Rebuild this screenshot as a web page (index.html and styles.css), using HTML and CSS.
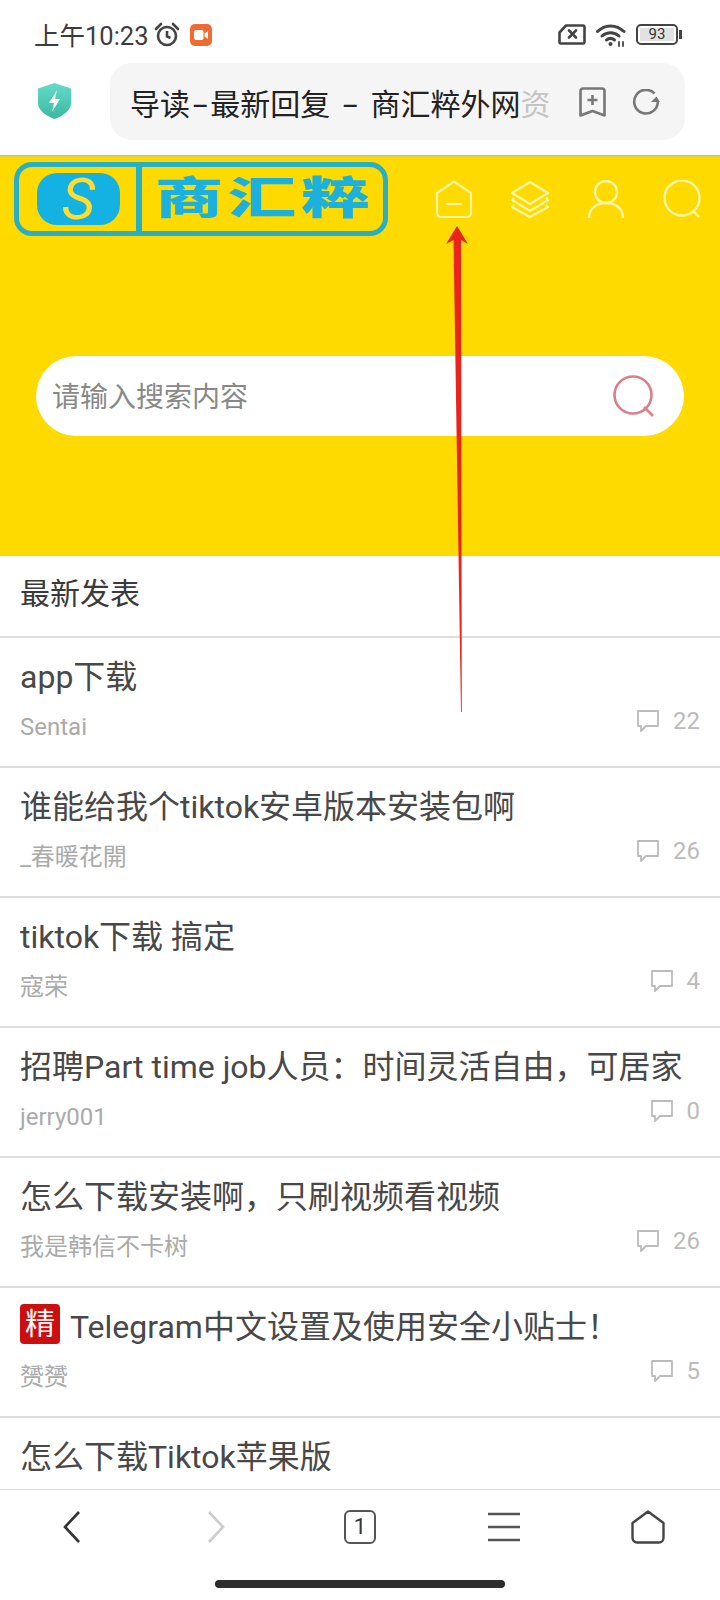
FILE: index.html
```html
<!DOCTYPE html>
<html lang="zh-CN">
<head>
    <meta charset="UTF-8">
    <meta name="viewport" content="width=device-width, initial-scale=1.0">
    <title>导读-最新回复 - 商汇粹外网资</title>
    <link rel="stylesheet" href="styles.css">
</head>
<body>
    <div class="page">
        <div class="status-bar">
            <span class="status-time">上午10:23</span>
            <svg class="icon-alarm" viewBox="0 0 26 25" fill="none" stroke="#444" stroke-width="2.600">
                <circle cx="13" cy="14" r="9"/>
                <path d="M13 9v5.500l3.500 1.500"/>
                <path d="M2 7l5-5M24 7l-5-5" stroke-linecap="round"/>
            </svg>
            <span class="status-rec">
                <svg viewBox="0 0 14 10" fill="#fff"><rect x="0" y="0" width="9.500" height="10" rx="2"/><path d="M10.500 3.500L14 1v8l-3.500-2.500z"/></svg>
            </span>
            <div class="status-right">
                <svg class="icon-sim" viewBox="0 0 28 21" fill="none" stroke="#444" stroke-width="2.600">
                    <path d="M8 1.500H25a1.500 1.500 0 0 1 1.500 1.500V18a1.500 1.500 0 0 1-1.500 1.500H3A1.500 1.500 0 0 1 1.500 18V8.500z" stroke-linejoin="round"/>
                    <path d="M11 6.500l7 7M18 6.500l-7 7" stroke-linecap="round"/>
                </svg>
                <svg class="icon-wifi" viewBox="0 0 30 24" fill="none" stroke="#444" stroke-width="3" stroke-linecap="round">
                    <path d="M1.500 8.500C9 1 20 1 28 8.500"/>
                    <path d="M6 13c5-4.500 12-4.500 17 0"/>
                    <path d="M10.500 17c2.500-2 5.500-2 8 0"/>
                    <circle cx="14.500" cy="21" r="2" fill="#444" stroke="none"/>
                    <path d="M23 19v4M27 19v4" stroke-width="1.800"/>
                </svg>
                <div class="battery">
                    <span class="battery-level">93</span>
                </div>
                <span class="battery-nub"></span>
            </div>
        </div>

        <div class="toolbar">
            <svg class="icon-shield" viewBox="0 0 33 36">
                <defs>
                    <linearGradient id="shieldFill" x1="0" y1="0" x2="0" y2="1">
                        <stop offset="0" stop-color="#63dccb"/>
                        <stop offset="1" stop-color="#3cb89f"/>
                    </linearGradient>
                </defs>
                <path d="M16.500 0L33 5.500V20c0 7.500-8 13-16.500 16C8 33 0 27.500 0 20V5.500z" fill="url(#shieldFill)"/>
                <path d="M19 7l-8 13h5l-2 9 8-13h-5z" fill="#fff"/>
            </svg>
            <div class="url-pill">
                <span class="url-text">导读<span class="url-dash">-</span>最新回复<span class="url-dash url-dash-wide">-</span>商汇粹外网<span class="url-fade">资</span></span>
                <svg class="icon-bookmark" viewBox="0 0 27 30" fill="none" stroke="#777" stroke-width="2.600" stroke-linejoin="round">
                    <path d="M4 1.500H23a2.500 2.500 0 0 1 2.500 2.500V28.500L13.500 24 1.500 28.500V4A2.500 2.500 0 0 1 4 1.500z"/>
                    <path d="M13.500 8v10M8.500 13h10"/>
                </svg>
                <svg class="icon-refresh" viewBox="0 0 28 26" fill="none" stroke="#777" stroke-width="2.600">
                    <path d="M22.500 4.500A11.800 11.800 0 1 0 25.800 13"/>
                    <path d="M19 13h9l-3.500-5.500z" fill="#777" stroke="none"/>
                </svg>
            </div>
        </div>

        <div class="content">
            <div class="site-header">
                <div class="header-top">
                    <div class="logo">
                        <div class="logo-mark"><span class="logo-badge">S</span></div>
                        <div class="logo-name"><span>商</span><span>汇</span><span>粹</span></div>
                    </div>
                    <div class="header-nav">
                        <svg viewBox="0 0 38 38" fill="none" stroke="#fff5a3" stroke-width="2.200">
                            <path d="M2 13L19 1.500 36 13V33a4 4 0 0 1-4 4H6a4 4 0 0 1-4-4z" stroke-linejoin="round"/>
                            <path d="M11 24h16"/>
                        </svg>
                        <svg viewBox="0 0 38 38" fill="none" stroke="#fff5a3" stroke-width="2.400" stroke-linejoin="round">
                            <path d="M19 2L37 13 19 24 1 13z"/>
                            <path d="M3 18L1 20 19 31 37 20 35 18"/>
                            <path d="M3 25L1 27 19 37 37 27 35 25"/>
                        </svg>
                        <svg viewBox="0 0 38 38" fill="none" stroke="#fff5a3" stroke-width="2.400">
                            <circle cx="19" cy="12" r="11"/>
                            <path d="M2 38C2 28 10 23 19 23S36 28 36 38"/>
                        </svg>
                        <svg viewBox="0 0 38 38" fill="none" stroke="#fff5a3" stroke-width="2.400">
                            <circle cx="19" cy="18" r="17.500"/>
                            <path d="M30 31l6 6"/>
                        </svg>
                    </div>
                </div>
                <div class="search-bar">
                    <span class="search-hint">请输入搜索内容</span>
                    <svg class="search-icon" viewBox="0 0 42 42" fill="none" stroke="#d9808a" stroke-width="2.600">
                        <circle cx="20" cy="20" r="18.500"/>
                        <path d="M31 32l9 9"/>
                    </svg>
                </div>
            </div>

            <div class="list-heading">最新发表</div>

            <div class="topic">
                <div class="topic-title">app下载</div>
                <div class="topic-foot">
                    <span class="topic-author">Sentai</span>
                    <span class="topic-replies"><svg viewBox="0 0 22 22" fill="none" stroke="#bbb" stroke-width="1.800"><path d="M1 1H21V16H9L4 21V16H1z" stroke-linejoin="round"/></svg>22</span>
                </div>
            </div>
            <div class="topic">
                <div class="topic-title">谁能给我个tiktok安卓版本安装包啊</div>
                <div class="topic-foot">
                    <span class="topic-author">_春暖花開</span>
                    <span class="topic-replies"><svg viewBox="0 0 22 22" fill="none" stroke="#bbb" stroke-width="1.800"><path d="M1 1H21V16H9L4 21V16H1z" stroke-linejoin="round"/></svg>26</span>
                </div>
            </div>
            <div class="topic">
                <div class="topic-title">tiktok下载 搞定</div>
                <div class="topic-foot">
                    <span class="topic-author">寇荣</span>
                    <span class="topic-replies"><svg viewBox="0 0 22 22" fill="none" stroke="#bbb" stroke-width="1.800"><path d="M1 1H21V16H9L4 21V16H1z" stroke-linejoin="round"/></svg>4</span>
                </div>
            </div>
            <div class="topic">
                <div class="topic-title">招聘Part time job人员：时间灵活自由，可居家</div>
                <div class="topic-foot">
                    <span class="topic-author">jerry001</span>
                    <span class="topic-replies"><svg viewBox="0 0 22 22" fill="none" stroke="#bbb" stroke-width="1.800"><path d="M1 1H21V16H9L4 21V16H1z" stroke-linejoin="round"/></svg>0</span>
                </div>
            </div>
            <div class="topic">
                <div class="topic-title">怎么下载安装啊，只刷视频看视频</div>
                <div class="topic-foot">
                    <span class="topic-author">我是韩信不卡树</span>
                    <span class="topic-replies"><svg viewBox="0 0 22 22" fill="none" stroke="#bbb" stroke-width="1.800"><path d="M1 1H21V16H9L4 21V16H1z" stroke-linejoin="round"/></svg>26</span>
                </div>
            </div>
            <div class="topic">
                <div class="topic-title"><span class="topic-badge">精</span>Telegram中文设置及使用安全小贴士！</div>
                <div class="topic-foot">
                    <span class="topic-author">赟赟</span>
                    <span class="topic-replies"><svg viewBox="0 0 22 22" fill="none" stroke="#bbb" stroke-width="1.800"><path d="M1 1H21V16H9L4 21V16H1z" stroke-linejoin="round"/></svg>5</span>
                </div>
            </div>
            <div class="topic">
                <div class="topic-title">怎么下载Tiktok苹果版</div>
            </div>
        </div>

        <div class="bottom-nav">
            <div class="bottom-item">
                <svg width="18" height="32" viewBox="0 0 18 32" fill="none" stroke="#333" stroke-width="2.600"><path d="M16 1L2 16 16 31"/></svg>
            </div>
            <div class="bottom-item">
                <svg width="18" height="32" viewBox="0 0 18 32" fill="none" stroke="#ccc" stroke-width="2.600"><path d="M2 1L16 16 2 31"/></svg>
            </div>
            <div class="bottom-item"><span class="tab-count">1</span></div>
            <div class="bottom-item">
                <svg width="32" height="30" viewBox="0 0 32 30" fill="none" stroke="#555" stroke-width="2.600"><path d="M0 2H32M0 15H32M0 28H32"/></svg>
            </div>
            <div class="bottom-item">
                <svg width="34" height="34" viewBox="0 0 34 34" fill="none" stroke="#444" stroke-width="2.400"><path d="M1.500 13L17 1.500 32.500 13V28a4.500 4.500 0 0 1-4.500 4.500H6A4.500 4.500 0 0 1 1.500 28z" stroke-linejoin="round"/></svg>
            </div>
        </div>
        <div class="home-indicator"></div>

        <!-- red arrow drawn on top of the screenshot -->
        <svg class="red-arrow" viewBox="0 0 30 490">
            <path d="M17 0L28 18 21 14 21.800 486H21L13.500 14 6 18z" fill="#e9241a"/>
        </svg>
    </div>
</body>
</html>
```

FILE: styles.css
```css
* {
    box-sizing: border-box;
}
body {
    margin: 0;
    background-color: #fff;
    font-family: Roboto, "Noto Sans CJK SC", sans-serif;
}
.page {
    position: relative;
    display: flex;
    flex-direction: column;
    width: 720px;
    height: 1600px;
    overflow: hidden;
}

/* status bar */
.status-bar {
    display: flex;
    align-items: center;
    flex-shrink: 0;
    height: 63px;
    padding: 6px 38px 0 34px;
}
.status-time {
    margin-bottom: 3px;
    font-size: 25.5px;
    color: #3c3c3c;
}
.icon-alarm {
    width: 26px;
    height: 25px;
    margin-left: 5px;
}
.status-rec {
    display: flex;
    align-items: center;
    justify-content: center;
    width: 22px;
    height: 22px;
    margin-left: 10px;
    border-radius: 5px;
    background-color: #ee6c34;
}
.status-rec svg {
    width: 14px;
    height: 10px;
}
.status-right {
    display: flex;
    align-items: center;
    margin-left: auto;
}
.icon-sim {
    width: 28px;
    height: 21px;
}
.icon-wifi {
    width: 30px;
    height: 24px;
    margin-left: 10px;
}
.battery {
    display: flex;
    align-items: center;
    justify-content: center;
    width: 42px;
    height: 21px;
    margin-left: 10px;
    padding: 2px;
    border: 2px solid #444;
    border-radius: 5px;
}
.battery-level {
    width: 100%;
    height: 100%;
    font-size: 15px;
    line-height: 13px;
    text-align: center;
    color: #333;
    background-color: #e2e2e2;
}
.battery-nub {
    width: 3px;
    height: 9px;
    margin-left: 1px;
    background-color: #444;
}

/* browser toolbar */
.toolbar {
    display: flex;
    align-items: flex-start;
    flex-shrink: 0;
    height: 92px;
}
.icon-shield {
    width: 33px;
    height: 36px;
    margin: 20px 0 0 38px;
}
.url-pill {
    display: flex;
    align-items: center;
    width: 575px;
    height: 77px;
    margin-left: 39px;
    padding-left: 20px;
    border-radius: 22px;
    background-color: #f5f5f6;
}
.url-text {
    width: 424px;
    white-space: nowrap;
    font-size: 30px;
    color: #222;
}
.url-dash {
    display: inline-block;
    margin: 0 6px;
    transform: scaleX(1.8);
}
.url-dash-wide {
    margin: 0 16px;
}
.url-fade {
    color: #c4c4c4;
}
.icon-bookmark {
    width: 27px;
    height: 30px;
    margin-left: 25px;
}
.icon-refresh {
    width: 28px;
    height: 26px;
    margin-left: 26px;
}

/* scrolling page */
.content {
    flex: 1;
    min-height: 0;
    overflow: hidden;
}
.site-header {
    height: 401px;
    padding: 7px 0 0 14px;
    border-top: 2px solid #e0cf33;
    background-color: #ffda00;
}
.header-top {
    display: flex;
    align-items: center;
    margin-top: -2px;
}
.logo {
    display: flex;
    width: 374px;
    height: 74px;
    border: 5px solid #27afc6;
    border-radius: 18px;
}
.logo-mark {
    display: flex;
    align-items: center;
    width: 123px;
    padding-left: 18px;
    border-right: 6px solid #27afc6;
}
.logo-badge {
    display: block;
    width: 83px;
    height: 52px;
    border-radius: 20px;
    font-style: italic;
    font-size: 58px;
    line-height: 52px;
    text-align: center;
    color: #ffdc30;
    background-color: #14b1e3;
}
.logo-name {
    display: flex;
    align-items: center;
    gap: 9px;
    padding-left: 13px;
    font-size: 44px;
    font-weight: 900;
    color: #1cb0dc;
}
.logo-name span {
    display: block;
    width: 64px;
    line-height: 44px;
    transform: scaleX(1.55);
    transform-origin: left center;
}
.header-nav {
    display: flex;
    gap: 38px;
    margin-left: 47px;
}
.header-nav svg {
    width: 38px;
    height: 38px;
}
.search-bar {
    display: flex;
    align-items: center;
    justify-content: space-between;
    width: 648px;
    height: 80px;
    margin: 120px 0 0 22px;
    padding: 0 29px 0 16px;
    border-radius: 40px;
    background-color: #fff;
}
.search-hint {
    margin-bottom: 2px;
    font-size: 28px;
    color: #888;
}
.search-icon {
    width: 42px;
    height: 42px;
}
.list-heading {
    height: 82px;
    padding: 0 20px;
    border-bottom: 2px solid #ddd;
    font-size: 30px;
    line-height: 76px;
    color: #3a3a3a;
}
.topic {
    height: 130px;
    padding: 14px 20px 0;
    border-bottom: 2px solid #ddd;
}
.topic-title {
    display: flex;
    align-items: center;
    height: 44px;
    white-space: nowrap;
    font-size: 32px;
    color: #484848;
}
.topic-badge {
    flex-shrink: 0;
    width: 40px;
    height: 40px;
    margin-right: 10px;
    border-radius: 4px;
    font-size: 30px;
    line-height: 40px;
    text-align: center;
    color: #fff;
    background-color: #cc0e0e;
}
.topic-foot {
    display: flex;
    align-items: flex-start;
    justify-content: space-between;
    margin-top: 15px;
}
.topic-author {
    font-size: 24px;
    line-height: 32px;
    color: #aaa;
}
.topic-replies {
    display: flex;
    align-items: center;
    gap: 14px;
    margin-top: -6px;
    font-size: 24px;
    line-height: 32px;
    color: #bbb;
}
.topic-replies svg {
    width: 22px;
    height: 22px;
}

/* browser bottom bar */
.bottom-nav {
    display: flex;
    flex-shrink: 0;
    height: 75px;
    border-top: 1px solid #ddd;
    background-color: #fff;
}
.bottom-item {
    display: flex;
    flex: 1;
    align-items: center;
    justify-content: center;
}
.tab-count {
    width: 32px;
    height: 34px;
    border: 2.500px solid #555;
    border-radius: 6px;
    font-size: 22px;
    line-height: 29px;
    text-align: center;
    color: #333;
}
.home-indicator {
    flex-shrink: 0;
    width: 290px;
    height: 8px;
    margin: 16px auto 12px;
    border-radius: 4px;
    background-color: #2e2e2e;
}
.red-arrow {
    position: absolute;
    top: 226px;
    left: 440px;
    width: 30px;
    height: 490px;
}
```
